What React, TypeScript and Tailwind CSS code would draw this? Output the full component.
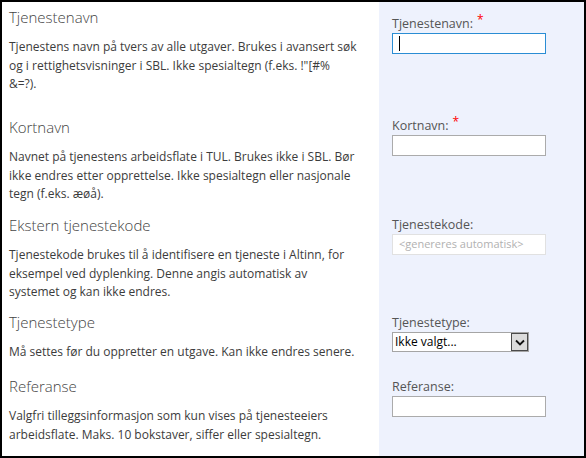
import React from 'react';

type Field = {
    title: string;
    lines: string[];
    label: string;
    required?: boolean;
    kind: 'input' | 'focused' | 'auto' | 'select';
    rowH: string;
    rightPt: string;
};

const fields: Field[] = [
    {
        title: 'Tjenestenavn',
        lines: [
            'Tjenestens navn på tvers av alle utgaver. Brukes i avansert søk',
            'og i rettighetsvisninger i SBL. Ikke spesialtegn (f.eks. !"[#%',
            '&=?).',
        ],
        label: 'Tjenestenavn:',
        required: true,
        kind: 'focused',
        rowH: 'h-[110px]',
        rightPt: 'pt-[13px]',
    },
    {
        title: 'Kortnavn',
        lines: [
            'Navnet på tjenestens arbeidsflate i TUL. Brukes ikke i SBL. Bør',
            'ikke endres etter opprettelse. Ikke spesialtegn eller nasjonale',
            'tegn (f.eks. æøå).',
        ],
        label: 'Kortnavn:',
        required: true,
        kind: 'input',
        rowH: 'h-[98px]',
        rightPt: 'pt-[5px]',
    },
    {
        title: 'Ekstern tjenestekode',
        lines: [
            'Tjenestekode brukes til å identifisere en tjeneste i Altinn, for',
            'eksempel ved dyplenking. Denne angis automatisk av',
            'systemet og kan ikke endres.',
        ],
        label: 'Tjenestekode:',
        kind: 'auto',
        rowH: 'h-[97px]',
        rightPt: 'pt-[6px]',
    },
    {
        title: 'Tjenestetype',
        lines: ['Må settes før du oppretter en utgave. Kan ikke endres senere.'],
        label: 'Tjenestetype:',
        kind: 'select',
        rowH: 'h-[64px]',
        rightPt: 'pt-[7px]',
    },
    {
        title: 'Referanse',
        lines: [
            'Valgfri tilleggsinformasjon som kun vises på tjenesteeiers',
            'arbeidsflate. Maks. 10 bokstaver, siffer eller spesialtegn.',
        ],
        label: 'Referanse:',
        kind: 'input',
        rowH: 'flex-1',
        rightPt: 'pt-[7px]',
    },
];

const Control: React.FC<{ kind: Field['kind'] }> = ({ kind }) => {
    if (kind === 'focused') {
        return (
            <div className="w-[154px] h-[21px] border border-[#2a8dd4] bg-white flex items-center pl-[6px]">
                <div className="w-px h-[15px] bg-black" />
            </div>
        );
    }
    if (kind === 'auto') {
        return (
            <div className="w-[154px] h-[21px] border border-[#e1e1e1] bg-white flex items-center pl-[6px] text-[11px] text-[#b1b1b1]">
                &lt;genereres automatisk&gt;
            </div>
        );
    }
    if (kind === 'select') {
        return (
            <div className="w-[137px] h-[20px] border border-[#a5a5a5] bg-white flex items-center">
                <span className="flex-1 pl-[2px] text-[12px] text-black leading-none">Ikke valgt...</span>
                <div className="w-[17px] h-[18px] border border-[#4a4a4a] bg-[#dcdcdc] flex items-center justify-center">
                    <svg width="10" height="7" viewBox="0 0 10 7">
                        <path d="M1 1.5 L5 5.5 L9 1.5" fill="none" stroke="#111" strokeWidth="1.8" />
                    </svg>
                </div>
            </div>
        );
    }
    return <div className="w-[154px] h-[21px] border border-[#ababab] bg-white" />;
};

export default function App() {
    return (
        <div className="w-[586px] h-[458px] border-2 border-black flex flex-col bg-white text-[#444]" style={{ fontFamily: '"Open Sans", "Noto Sans", sans-serif' }}>
            {fields.map((f) => (
                <div key={f.title} className={`flex ${f.rowH}`}>
                    <div className="w-[377px] pl-[7px] pt-[4px]">
                        <h2 className="text-[15px] font-light leading-[22px] text-[#444]">{f.title}</h2>
                        <p className="mt-[10px] text-[12px] leading-[18.5px] text-[#3c3c3c] whitespace-nowrap">
                            {f.lines.map((l, i) => (
                                <React.Fragment key={i}>
                                    {l}
                                    {i < f.lines.length - 1 && <br />}
                                </React.Fragment>
                            ))}
                        </p>
                    </div>
                    <div className={`flex-1 bg-[#eef2fd] pl-[13px] ${f.rightPt}`}>
                        <div className="text-[12.5px] leading-[18px] text-[#555]">
                            {f.label}
                            {f.required && <span className="text-[#f00] ml-[4px] relative top-[-4px] text-[12px]">*</span>}
                        </div>
                        <Control kind={f.kind} />
                    </div>
                </div>
            ))}
        </div>
    );
}
